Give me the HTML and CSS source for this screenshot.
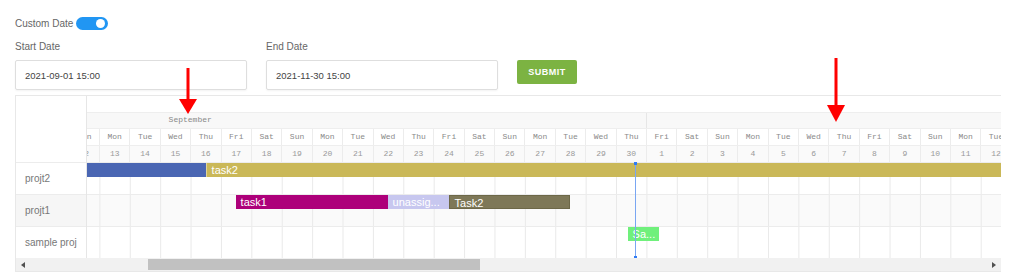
FILE: index.html
```html
<!DOCTYPE html>
<html lang="en">
<head>
  <meta charset="UTF-8" />
  <title>Project Timeline</title>
  <link rel="stylesheet" href="styles.css">
</head>
<body>
  <div class="page">
    <!-- Date filter -->
    <div class="toggle-row">
      <span>Custom Date</span>
      <span class="switch"><span class="knob"></span></span>
    </div>
    <div class="date-form">
      <div class="field">
        <label>Start Date</label>
        <div class="input">2021-09-01 15:00</div>
      </div>
      <div class="field">
        <label>End Date</label>
        <div class="input">2021-11-30 15:00</div>
      </div>
      <button class="submit">SUBMIT</button>
    </div>

    <!-- Gantt chart -->
    <div class="gantt">
      <div class="gantt-main">
        <div class="sidebar">
          <div class="side-head"></div>
          <div class="side-row">projt2</div>
          <div class="side-row alt">projt1</div>
          <div class="side-row">sample proj</div>
        </div>
        <div class="timeline">
          <div class="track">
            <div class="head-blank"></div>
            <div class="months">
              <div class="month sep">September</div>
              <div class="month oct"></div>
            </div>
            <div class="cells days">
              <div class="cell">Sun</div><div class="cell">Mon</div><div class="cell">Tue</div><div class="cell">Wed</div><div class="cell">Thu</div><div class="cell">Fri</div><div class="cell">Sat</div>
              <div class="cell">Sun</div><div class="cell">Mon</div><div class="cell">Tue</div><div class="cell">Wed</div><div class="cell">Thu</div><div class="cell">Fri</div><div class="cell">Sat</div>
              <div class="cell">Sun</div><div class="cell">Mon</div><div class="cell">Tue</div><div class="cell">Wed</div><div class="cell">Thu</div><div class="cell">Fri</div><div class="cell">Sat</div>
              <div class="cell">Sun</div><div class="cell">Mon</div><div class="cell">Tue</div><div class="cell">Wed</div><div class="cell">Thu</div><div class="cell">Fri</div><div class="cell">Sat</div>
              <div class="cell">Sun</div><div class="cell">Mon</div><div class="cell">Tue</div>
            </div>
            <div class="cells dates">
              <div class="cell">12</div><div class="cell">13</div><div class="cell">14</div><div class="cell">15</div><div class="cell">16</div><div class="cell">17</div><div class="cell">18</div>
              <div class="cell">19</div><div class="cell">20</div><div class="cell">21</div><div class="cell">22</div><div class="cell">23</div><div class="cell">24</div><div class="cell">25</div>
              <div class="cell">26</div><div class="cell">27</div><div class="cell">28</div><div class="cell">29</div><div class="cell">30</div><div class="cell">1</div><div class="cell">2</div>
              <div class="cell">3</div><div class="cell">4</div><div class="cell">5</div><div class="cell">6</div><div class="cell">7</div><div class="cell">8</div><div class="cell">9</div>
              <div class="cell">10</div><div class="cell">11</div><div class="cell">12</div>
            </div>
            <div class="lanes">
              <div class="lane">
                <div class="bar blue" style="left:0; width:137px"></div>
                <div class="bar gold" style="left:137px; width:900px">task2</div>
              </div>
              <div class="lane alt">
                <div class="bar magenta" style="left:167px; width:152px">task1</div>
                <div class="bar lavender" style="left:319px; width:61px">unassig...</div>
                <div class="bar olive" style="left:380px; width:121px">Task2</div>
              </div>
              <div class="lane">
                <div class="bar green" style="left:559px; width:31px">Sa...</div>
              </div>
              <div class="today" style="left:566px"></div>
            </div>
          </div>
        </div>
      </div>
      <div class="hscroll">
        <span class="arrow left"></span>
        <span class="thumb"></span>
        <span class="arrow right"></span>
      </div>
    </div>

    <!-- Annotation arrows -->
    <svg class="marks" width="1024" height="273" viewBox="0 0 1024 273">
      <rect x="186.5" y="68" width="3" height="32" fill="#ff0000"/>
      <polygon points="179,99 197,99 188,114" fill="#ff0000"/>
      <rect x="834.5" y="58" width="3" height="48" fill="#ff0000"/>
      <polygon points="827,105 845,105 836,122" fill="#ff0000"/>
    </svg>
  </div>
</body>
</html>
```

FILE: styles.css
```css
:root {
  --day: 30.4px;
}
body {
  margin: 0;
  background: #fff;
  color: #666;
  font-family: "Liberation Sans", Arial, sans-serif;
}
.page {
  position: relative;
  padding: 17px 0 0 15px;
  height: 256px;
  overflow: hidden;
}
/* Date filter */
.toggle-row {
  display: flex;
  align-items: center;
  gap: 3px;
  height: 13px;
  font-size: 10px;
}
.switch {
  width: 32px;
  height: 13px;
  border-radius: 7px;
  background: #2196f3;
  display: flex;
  align-items: center;
  justify-content: flex-end;
  padding-right: 3px;
  box-sizing: border-box;
}
.knob {
  width: 9px;
  height: 9px;
  border-radius: 50%;
  background: #fff;
}
.date-form {
  display: flex;
  align-items: flex-end;
  gap: 19px;
  margin-top: 11px;
}
.field {
  display: flex;
  flex-direction: column;
  gap: 7px;
}
.field label {
  font-size: 10px;
  line-height: 12px;
}
.input {
  width: 232px;
  height: 30px;
  box-sizing: border-box;
  border: 1px solid #dedede;
  border-radius: 2px;
  box-shadow: 0 1px 2px rgba(0,0,0,0.05);
  padding-left: 9px;
  display: flex;
  align-items: center;
  font-size: 9.5px;
  color: #444;
}
.submit {
  margin-bottom: 6px;
  width: 60px;
  height: 24px;
  padding: 0;
  border: none;
  border-radius: 2px;
  background: #7cb342;
  color: #fff;
  font: bold 9px "Liberation Sans", Arial, sans-serif;
  letter-spacing: 0.5px;
}
/* Gantt */
.gantt {
  margin-top: 5px;
  width: 985px;
  border: 1px solid #e8e8e8;
  border-right: none;
}
.gantt-main {
  display: flex;
}
.sidebar {
  width: 70px;
  flex: none;
  border-right: 1px solid #e6e6e6;
}
.side-head {
  height: 66px;
}
.side-row {
  height: 31px;
  border-top: 1px solid #ececec;
  display: flex;
  align-items: center;
  padding-left: 9px;
  font-size: 10px;
  color: #777;
}
.side-row.alt {
  background: #f6f6f6;
}
.timeline {
  flex: 1;
  overflow: hidden;
}
.track {
  margin-left: -18.4px;
  width: calc(var(--day) * 31);
}
.head-blank {
  height: 16px;
}
.months {
  display: flex;
  margin-left: calc(var(--day) * -11);
  border-top: 1px solid #eeeeee;
  background: #f8f8f8;
}
.month {
  flex: none;
  height: 15px;
  padding-top: 2px;
  box-sizing: border-box;
  line-height: 15px;
  text-align: center;
  font: 8px "Liberation Mono", monospace;
  color: #888;
}
.month.sep {
  width: calc(var(--day) * 30);
}
.month.oct {
  width: calc(var(--day) * 31);
  border-left: 1px solid #e6e6e6;
}
.cells {
  display: flex;
  border-top: 1px solid #eeeeee;
}
.cell {
  flex: none;
  width: var(--day);
  box-sizing: border-box;
  border-left: 1px solid #ececec;
  text-align: center;
  font: 8px "Liberation Mono", monospace;
  color: #8a8a8a;
}
.days .cell {
  height: 16px;
  line-height: 16px;
  background: #fff;
}
.dates .cell {
  height: 16px;
  line-height: 16px;
  background: #fafafa;
  color: #999;
}
.lanes {
  position: relative;
}
.lane {
  position: relative;
  height: 31px;
  border-top: 1px solid #ececec;
  background-image: linear-gradient(to right, #e9e9e9 1px, transparent 1px);
  background-size: var(--day) 100%;
}
.lane.alt {
  background-color: #fafafa;
}
.bar {
  position: absolute;
  top: 0;
  height: 14px;
  line-height: 14px;
  box-sizing: border-box;
  padding-left: 5px;
  color: #fff;
  font-size: 11px;
  white-space: nowrap;
  overflow: hidden;
}
.bar.blue { background: #4a66b3; }
.bar.gold { background: #cab858; border-left: 1px solid #e0d49a; }
.bar.magenta { background: #ad007a; }
.bar.lavender { background: #c7c7ef; }
.bar.olive { background: #7e7858; border: 1px solid #6d6848; }
.bar.green { background: #70f07c; }
.today {
  position: absolute;
  top: 1px;
  bottom: 0;
  width: 1px;
  background: #79a6f2;
}
.today::before,
.today::after {
  content: "";
  position: absolute;
  left: -1px;
  width: 3px;
  height: 3px;
  background: #2f7bf5;
}
.today::before { top: -1px; }
.today::after { bottom: -1px; }
/* Scrollbar */
.hscroll {
  display: flex;
  align-items: center;
  height: 13px;
  background: #f1f1f1;
}
.arrow {
  width: 0;
  height: 0;
  border-top: 3px solid transparent;
  border-bottom: 3px solid transparent;
}
.arrow.left {
  margin-left: 5px;
  border-right: 4px solid #505050;
}
.arrow.right {
  margin-left: auto;
  margin-right: 5px;
  border-left: 4px solid #505050;
}
.thumb {
  margin-left: 123px;
  width: 332px;
  height: 11px;
  background: #c1c1c1;
}
.marks {
  position: absolute;
  top: 0;
  left: 0;
  pointer-events: none;
}
```
